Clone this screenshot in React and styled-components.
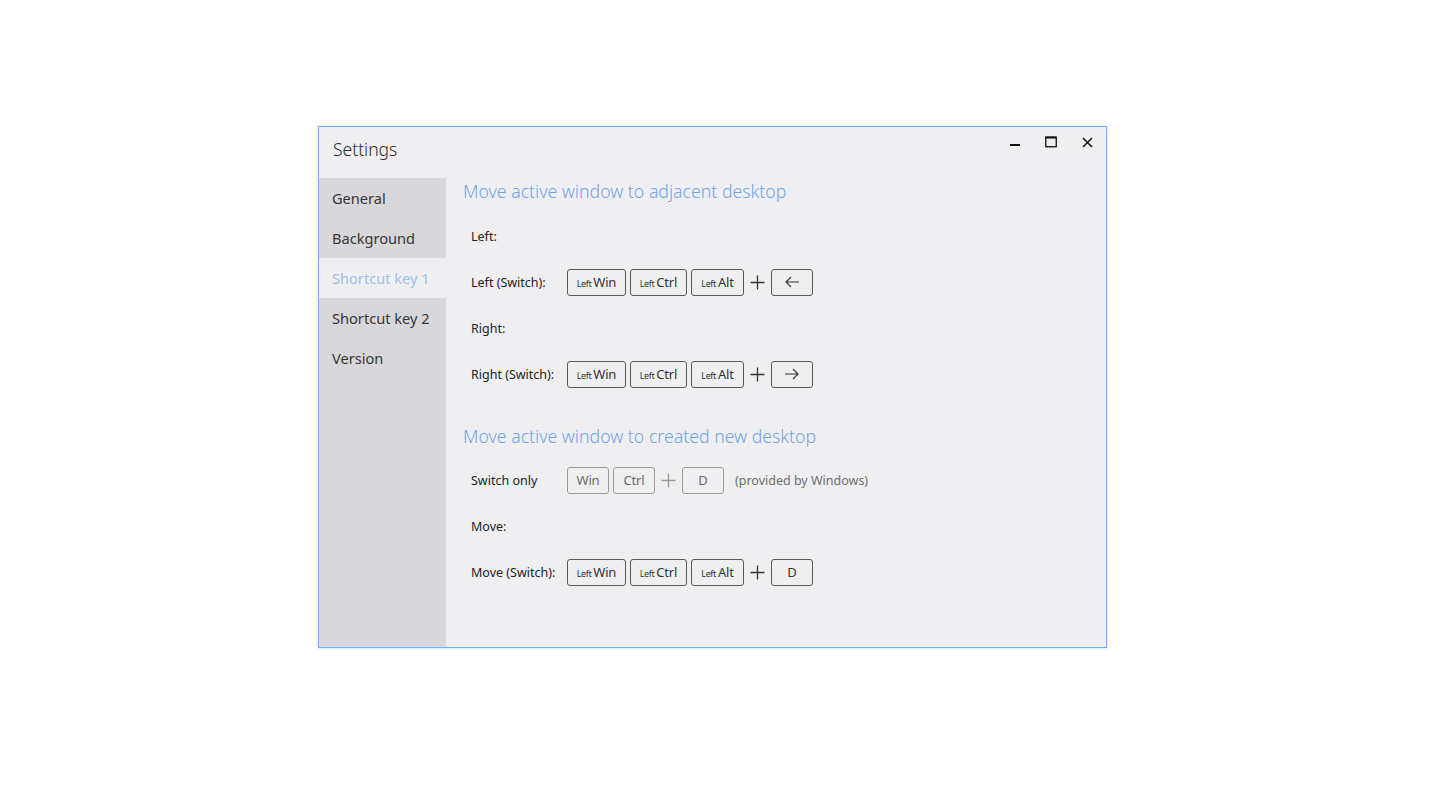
import React from "react";
import styled, { createGlobalStyle } from "styled-components";

const Global = createGlobalStyle`
  html, body { margin: 0; padding: 0; background: #ffffff; }
  body { font-family: "Noto Sans", "Open Sans", sans-serif; }
`;

const Page = styled.div`
  width: 1440px;
  height: 810px;
  box-sizing: border-box;
  padding: 126px 0 0 318px;
`;

const Window = styled.div`
  width: 789px;
  height: 522px;
  box-sizing: border-box;
  border: 1px solid #77b1f2;
  box-shadow: 0 0 3px rgba(110, 170, 240, 0.45);
  background: #efeff1;
  display: flex;
  flex-direction: column;
`;

const TitleBar = styled.div`
  height: 51px;
  flex: 0 0 51px;
  display: flex;
  align-items: flex-start;
  justify-content: space-between;
`;

const Title = styled.div`
  padding: 10px 0 0 14px;
  font-size: 17.5px;
  font-weight: 300;
  line-height: 24px;
  color: #2b2b2b;
`;

const Controls = styled.div`
  display: flex;
  align-items: center;
  padding: 4px 1px 0 0;
`;

const ControlButton = styled.div`
  width: 36px;
  height: 22px;
  display: flex;
  align-items: center;
  justify-content: center;
  color: #111;
`;

const Body = styled.div`
  flex: 1;
  display: flex;
  min-height: 0;
`;

const Sidebar = styled.nav`
  width: 127px;
  flex: 0 0 127px;
  background: #d8d7db;
  display: flex;
  flex-direction: column;
`;

const NavItem = styled.div`
  height: 40px;
  display: flex;
  align-items: center;
  padding-left: 13px;
  font-size: 14.6px;
  font-weight: 400;
  color: ${(p) => (p.$active ? "#9cc0ea" : "#363636")};
  background: ${(p) => (p.$active ? "#efeff1" : "transparent")};
`;

const Content = styled.main`
  flex: 1;
  padding-left: 17px;
  display: flex;
  flex-direction: column;
`;

const Heading = styled.h2`
  margin: ${(p) => p.$top}px 0 ${(p) => p.$bottom}px 0;
  font-size: 17.7px;
  line-height: 26px;
  font-weight: 300;
  color: #6fa4e8;
`;

const Row = styled.div`
  height: 46px;
  display: flex;
  align-items: center;
  padding-left: 8px;
`;

const Label = styled.div`
  width: 96px;
  flex: 0 0 96px;
  font-size: 12.5px;
  color: #222;
`;

const Keys = styled.div`
  display: flex;
  align-items: center;
  gap: 4px;
`;

const Key = styled.div`
  width: ${(p) => p.$w}px;
  height: 27px;
  box-sizing: border-box;
  border: 1px solid ${(p) => (p.$muted ? "#9a9a9a" : "#5a5a5a")};
  border-radius: 3px;
  display: flex;
  align-items: center;
  justify-content: center;
  gap: 2px;
  font-size: 13px;
  color: ${(p) => (p.$muted ? "#6a6a6a" : "#333")};
  letter-spacing: -0.2px;
`;

const Small = styled.span`
  font-size: 9px;
  letter-spacing: -0.4px;
  padding-top: 2px;
`;

const Plus = styled.div`
  width: 19px;
  display: flex;
  justify-content: center;
  color: ${(p) => (p.$muted ? "#9a9a9a" : "#333")};
`;

const Note = styled.div`
  margin-left: 11px;
  font-size: 12.5px;
  color: #6e6e6e;
`;

const PlusIcon = () => (
  <svg width="15" height="15" viewBox="0 0 15 15">
    <path d="M7.5 0.5v14M0.5 7.5h14" stroke="currentColor" strokeWidth="1.3" fill="none" />
  </svg>
);

const Arrow = ({ dir }) => (
  <svg width="16" height="12" viewBox="0 0 16 12">
    {dir === "left" ? (
      <path d="M15 6H2M7 1L2 6l5 5" stroke="#333" strokeWidth="1.1" fill="none" />
    ) : (
      <path d="M1 6h13M9 1l5 5-5 5" stroke="#333" strokeWidth="1.1" fill="none" />
    )}
  </svg>
);

const ModKeys = ({ last }) => (
  <Keys>
    <Key $w={59}><Small>Left</Small>Win</Key>
    <Key $w={57}><Small>Left</Small>Ctrl</Key>
    <Key $w={53}><Small>Left</Small>Alt</Key>
    <Plus><PlusIcon /></Plus>
    <Key $w={42}>{last}</Key>
  </Keys>
);

const navItems = ["General", "Background", "Shortcut key 1", "Shortcut key 2", "Version"];

export default function App() {
  return (
    <>
      <Global />
      <Page>
        <Window>
          <TitleBar>
            <Title>Settings</Title>
            <Controls>
              <ControlButton>
                <svg width="12" height="12" viewBox="0 0 12 12">
                  <rect x="1" y="8" width="10" height="2" fill="#111" />
                </svg>
              </ControlButton>
              <ControlButton>
                <svg width="12" height="12" viewBox="0 0 12 12">
                  <rect x="0.75" y="1.25" width="10.5" height="9.5" stroke="#111" strokeWidth="1.3" fill="none" />
                  <rect x="0.5" y="0.5" width="11" height="2" fill="#111" />
                </svg>
              </ControlButton>
              <ControlButton>
                <svg width="11" height="11" viewBox="0 0 11 11">
                  <path d="M1 1l9 9M10 1l-9 9" stroke="#111" strokeWidth="1.5" fill="none" />
                </svg>
              </ControlButton>
            </Controls>
          </TitleBar>
          <Body>
            <Sidebar>
              {navItems.map((n) => (
                <NavItem key={n} $active={n === "Shortcut key 1"}>{n}</NavItem>
              ))}
            </Sidebar>
            <Content>
              <Heading $top={0} $bottom={9}>Move active window to adjacent desktop</Heading>
              <Row><Label>Left:</Label></Row>
              <Row>
                <Label>Left (Switch):</Label>
                <ModKeys last={<Arrow dir="left" />} />
              </Row>
              <Row><Label>Right:</Label></Row>
              <Row>
                <Label>Right (Switch):</Label>
                <ModKeys last={<Arrow dir="right" />} />
              </Row>
              <Heading $top={26} $bottom={8}>Move active window to created new desktop</Heading>
              <Row>
                <Label>Switch only</Label>
                <Keys>
                  <Key $w={42} $muted>Win</Key>
                  <Key $w={42} $muted>Ctrl</Key>
                  <Plus $muted><PlusIcon /></Plus>
                  <Key $w={42} $muted>D</Key>
                </Keys>
                <Note>(provided by Windows)</Note>
              </Row>
              <Row><Label>Move:</Label></Row>
              <Row>
                <Label>Move (Switch):</Label>
                <ModKeys last="D" />
              </Row>
            </Content>
          </Body>
        </Window>
      </Page>
    </>
  );
}
